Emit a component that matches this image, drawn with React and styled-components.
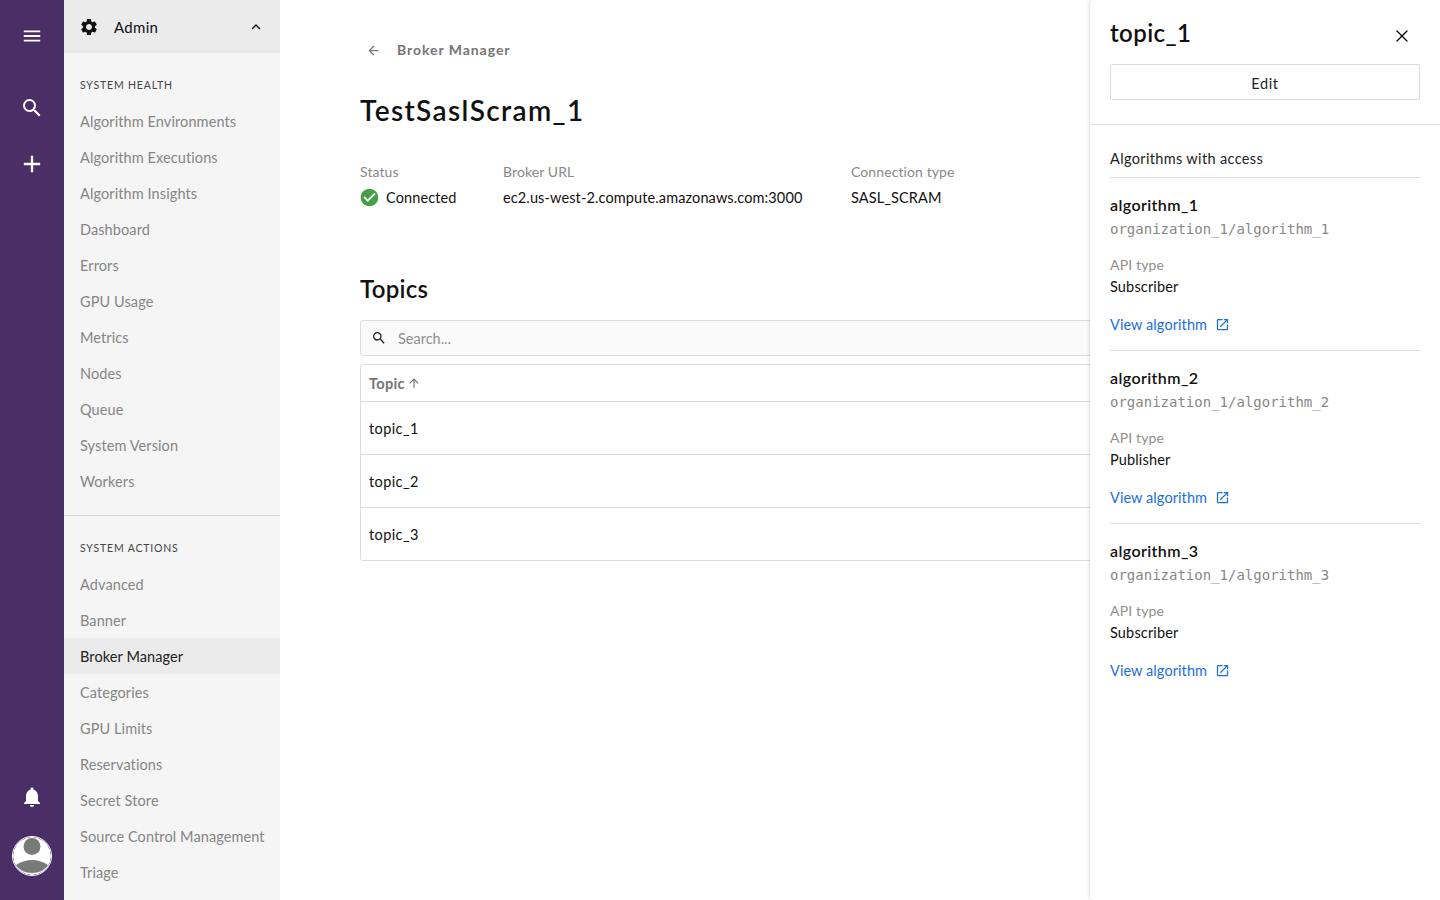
import React from 'react';
import styled, { createGlobalStyle } from 'styled-components';
import { X } from 'lucide-react';
import {
  MdMenu,
  MdSearch,
  MdAdd,
  MdNotifications,
  MdSettings,
  MdExpandLess,
  MdArrowBack,
  MdArrowUpward,
  MdCheckCircle,
  MdOpenInNew
} from 'react-icons/md';

const healthItems = [
  'Algorithm Environments',
  'Algorithm Executions',
  'Algorithm Insights',
  'Dashboard',
  'Errors',
  'GPU Usage',
  'Metrics',
  'Nodes',
  'Queue',
  'System Version',
  'Workers'
];

const actionItems = [
  'Advanced',
  'Banner',
  'Broker Manager',
  'Categories',
  'GPU Limits',
  'Reservations',
  'Secret Store',
  'Source Control Management',
  'Triage'
];

const topics = ['topic_1', 'topic_2', 'topic_3'];

const algorithms = [
  { name: 'algorithm_1', path: 'organization_1/algorithm_1', type: 'Subscriber' },
  { name: 'algorithm_2', path: 'organization_1/algorithm_2', type: 'Publisher' },
  { name: 'algorithm_3', path: 'organization_1/algorithm_3', type: 'Subscriber' }
];

export default function App() {
  return (
    <Page>
      <GlobalStyle />
      <Rail>
        <RailTop>
          <RailButton $height={72}><MdMenu size={22} /></RailButton>
          <RailButton $height={71}><MdSearch size={24} /></RailButton>
          <RailButton $height={41}><MdAdd size={28} /></RailButton>
        </RailTop>
        <RailBottom>
          <RailButton $height={40}><MdNotifications size={24} /></RailButton>
          <Avatar>
            <svg width="38" height="38" viewBox="0 0 38 38">
              <circle cx="19" cy="19" r="19" fill="#fff" />
              <circle cx="19" cy="9.500" r="8.500" fill="#7a7a7a" />
              <path d="M3 28C8 24.500 14 23 19 23s11 1.500 16 5c-3 5-9 8-16 8S6 33 3 28z" fill="#7a7a7a" />
            </svg>
          </Avatar>
        </RailBottom>
      </Rail>

      <Sidebar>
        <AdminHeader>
          <MdSettings size={20} />
          <AdminLabel>Admin</AdminLabel>
          <MdExpandLess size={18} />
        </AdminHeader>
        <SectionLabel>SYSTEM HEALTH</SectionLabel>
        {healthItems.map(item => (
          <NavItem key={item}>{item}</NavItem>
        ))}
        <NavDivider />
        <SectionLabel>SYSTEM ACTIONS</SectionLabel>
        {actionItems.map(item => (
          <NavItem key={item} $active={item === 'Broker Manager'}>{item}</NavItem>
        ))}
      </Sidebar>

      <Main>
        <BackRow>
          <MdArrowBack size={15} />
          <BackLabel>Broker Manager</BackLabel>
        </BackRow>
        <Title>TestSaslScram_1</Title>
        <MetaRow>
          <MetaColumn $width="95px">
            <MetaLabel>Status</MetaLabel>
            <MetaValue>
              <StatusIcon><MdCheckCircle size={21} /></StatusIcon>
              Connected
            </MetaValue>
          </MetaColumn>
          <MetaColumn $width="300px">
            <MetaLabel>Broker URL</MetaLabel>
            <MetaValue>ec2.us-west-2.compute.amazonaws.com:3000</MetaValue>
          </MetaColumn>
          <MetaColumn>
            <MetaLabel>Connection type</MetaLabel>
            <MetaValue>SASL_SCRAM</MetaValue>
          </MetaColumn>
        </MetaRow>
        <SectionTitle>Topics</SectionTitle>
        <SearchBox>
          <MdSearch size={16} />
          <SearchInput placeholder="Search..." readOnly />
        </SearchBox>
        <Table>
          <TableHead>
            Topic
            <MdArrowUpward size={14} />
          </TableHead>
          {topics.map(topic => (
            <TableRow key={topic}>{topic}</TableRow>
          ))}
        </Table>
      </Main>

      <Drawer>
        <DrawerHeader>
          <DrawerTitleRow>
            <DrawerTitle>topic_1</DrawerTitle>
            <CloseButton><X size={20} strokeWidth={1.6} /></CloseButton>
          </DrawerTitleRow>
          <EditButton>Edit</EditButton>
        </DrawerHeader>
        <DrawerBody>
          <AccessTitle>Algorithms with access</AccessTitle>
          {algorithms.map((algo, i) => (
            <AlgoBlock key={algo.name} $last={i === algorithms.length - 1}>
              <AlgoName>{algo.name}</AlgoName>
              <AlgoPath>{algo.path}</AlgoPath>
              <ApiLabel>API type</ApiLabel>
              <ApiValue>{algo.type}</ApiValue>
              <ViewLink href="#">
                View algorithm
                <MdOpenInNew size={15} />
              </ViewLink>
            </AlgoBlock>
          ))}
        </DrawerBody>
      </Drawer>
    </Page>
  );
}

const GlobalStyle = createGlobalStyle`
  html, body {
    margin: 0;
    height: 100%;
    overflow: hidden;
    background: #fff;
  }
  body {
    font-family: Lato, "Open Sans", sans-serif;
    color: #111;
  }
`;

const Page = styled.div`
  position: relative;
  display: flex;
  width: 1440px;
  height: 900px;
  overflow: hidden;
`;

const Rail = styled.div`
  width: 64px;
  flex-shrink: 0;
  display: flex;
  flex-direction: column;
  justify-content: space-between;
  background: #4a2f66;
  color: #fff;
`;

const RailTop = styled.div`
  display: flex;
  flex-direction: column;
`;

const RailBottom = styled.div`
  display: flex;
  flex-direction: column;
  align-items: center;
  padding-bottom: 24px;
`;

const RailButton = styled.div`
  width: 64px;
  height: ${props => props.$height}px;
  display: flex;
  align-items: center;
  justify-content: center;
`;

const Avatar = styled.div`
  width: 38px;
  height: 38px;
  margin-top: 19px;
  border: 1px solid #fff;
  border-radius: 50%;
  overflow: hidden;
`;

const Sidebar = styled.div`
  width: 216px;
  flex-shrink: 0;
  background: #f5f5f5;
`;

const AdminHeader = styled.div`
  height: 53px;
  display: flex;
  align-items: center;
  padding: 0 15px;
  box-sizing: border-box;
  background: #ebebeb;
  color: #111;
`;

const AdminLabel = styled.span`
  flex: 1;
  margin-left: 15px;
  font-size: 15px;
  letter-spacing: 0.3px;
`;

const SectionLabel = styled.div`
  height: 14px;
  margin: 25px 0 11px;
  padding-left: 16px;
  font-size: 10.5px;
  line-height: 14px;
  letter-spacing: 0.82px;
  color: #444;
`;

const NavItem = styled.div`
  height: 36px;
  padding-left: 16px;
  font-size: 14.5px;
  line-height: 38px;
  letter-spacing: 0.1px;
  white-space: nowrap;
  color: ${props => (props.$active ? '#222' : '#858585')};
  background: ${props => (props.$active ? '#ebebeb' : 'transparent')};
`;

const NavDivider = styled.div`
  height: 1px;
  margin-top: 16px;
  background: #d8d8d8;
`;

const Main = styled.div`
  flex: 1;
  min-width: 0;
  padding: 0 0 0 80px;
`;

const BackRow = styled.div`
  display: flex;
  align-items: center;
  gap: 16px;
  height: 20px;
  margin-top: 40px;
  padding-left: 6px;
  color: #757575;
`;

const BackLabel = styled.span`
  margin-top: -1px;
  font-size: 14px;
  font-weight: 700;
  letter-spacing: 0.95px;
`;

const Title = styled.h1`
  margin: 30px 0 0;
  font-size: 28px;
  line-height: 40px;
  font-weight: 600;
  letter-spacing: 1.37px;
  color: #111;
`;

const MetaRow = styled.div`
  display: flex;
  gap: 48px;
  margin-top: 32px;
`;

const MetaColumn = styled.div`
  display: flex;
  flex-direction: column;
  width: ${props => props.$width || 'auto'};
  white-space: nowrap;
`;

const MetaLabel = styled.div`
  font-size: 14px;
  line-height: 20px;
  letter-spacing: 0.1px;
  color: #888;
`;

const MetaValue = styled.div`
  display: flex;
  align-items: center;
  height: 30px;
  font-size: 14.5px;
  letter-spacing: 0.12px;
  color: #111;
`;

const StatusIcon = styled.span`
  display: flex;
  margin: 0 6px 0 -1px;
  color: #43a047;
`;

const SectionTitle = styled.h2`
  margin: 60px 0 0;
  font-size: 24px;
  line-height: 34px;
  font-weight: 600;
  letter-spacing: 0.3px;
  color: #111;
`;

const SearchBox = styled.div`
  display: flex;
  align-items: center;
  gap: 11px;
  width: 1000px;
  height: 36px;
  margin-top: 14px;
  padding-left: 10px;
  box-sizing: border-box;
  border: 1px solid #dcdcdc;
  border-radius: 3px;
  background: #fafafa;
  color: #222;
`;

const SearchInput = styled.input`
  flex: 1;
  border: 0;
  outline: 0;
  padding: 0;
  background: transparent;
  font-family: inherit;
  font-size: 14.5px;
  &::placeholder {
    color: #8f8f8f;
    opacity: 1;
  }
`;

const Table = styled.div`
  width: 1000px;
  margin-top: 8px;
  box-sizing: border-box;
  border: 1px solid #dcdcdc;
  border-radius: 3px;
`;

const TableHead = styled.div`
  display: flex;
  align-items: center;
  gap: 2px;
  height: 36px;
  padding-left: 8px;
  font-size: 14.5px;
  font-weight: 700;
  letter-spacing: 0.3px;
  color: #757575;
`;

const TableRow = styled.div`
  height: 52px;
  padding-left: 8px;
  border-top: 1px solid #dcdcdc;
  font-size: 14.5px;
  line-height: 54px;
  letter-spacing: 0.4px;
  color: #111;
`;

const Drawer = styled.aside`
  position: absolute;
  top: 0;
  right: 0;
  bottom: 0;
  width: 350px;
  background: #fff;
  border-radius: 4px 0 0 4px;
  box-shadow: 0 0 4px rgba(0, 0, 0, 0.2);
`;

const DrawerHeader = styled.div`
  padding: 16px 20px 24px;
  border-bottom: 1px solid #e0e0e0;
`;

const DrawerTitleRow = styled.div`
  display: flex;
  align-items: flex-start;
  justify-content: space-between;
  height: 48px;
`;

const DrawerTitle = styled.h3`
  margin: 0;
  font-size: 24px;
  line-height: 34px;
  font-weight: 600;
  letter-spacing: 0.4px;
  color: #111;
`;

const CloseButton = styled.div`
  display: flex;
  margin: 10px 8px 0 0;
  color: #111;
`;

const EditButton = styled.button`
  display: block;
  width: 100%;
  height: 36px;
  padding: 2px 0 0;
  background: #fff;
  border: 1px solid #dcdcdc;
  border-radius: 2px;
  font-family: inherit;
  font-size: 14.5px;
  letter-spacing: 0.6px;
  color: #222;
`;

const DrawerBody = styled.div`
  padding: 24px 20px 0;
`;

const AccessTitle = styled.div`
  height: 28px;
  font-size: 14.5px;
  line-height: 20px;
  letter-spacing: 0.35px;
  color: #222;
  border-bottom: 1px solid #e0e0e0;
`;

const AlgoBlock = styled.div`
  height: 157px;
  padding-top: 15px;
  border-bottom: ${props => (props.$last ? '0' : '1px solid #e0e0e0')};
`;

const AlgoName = styled.div`
  font-size: 16px;
  line-height: 24px;
  font-weight: 600;
  letter-spacing: 0.4px;
  color: #111;
`;

const AlgoPath = styled.div`
  margin-top: 2px;
  font-family: "DejaVu Sans Mono", monospace;
  font-size: 14px;
  line-height: 20px;
  color: #888;
`;

const ApiLabel = styled.div`
  margin-top: 16px;
  font-size: 14px;
  line-height: 20px;
  letter-spacing: 0.15px;
  color: #8f8f8f;
`;

const ApiValue = styled.div`
  margin-top: 2px;
  font-size: 14.5px;
  line-height: 20px;
  letter-spacing: 0.15px;
  color: #111;
`;

const ViewLink = styled.a`
  display: flex;
  align-items: center;
  gap: 8px;
  margin-top: 17px;
  height: 20px;
  font-size: 14.5px;
  letter-spacing: 0.08px;
  color: #1a6fe0;
  text-decoration: none;
`;
